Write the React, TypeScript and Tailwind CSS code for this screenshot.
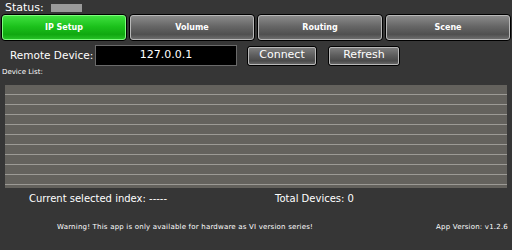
import React from "react";

const font = { fontFamily: '"DejaVu Sans", "Liberation Sans", sans-serif' };

function Tab({ label, active }: { label: string; active?: boolean }) {
  return (
    <div className="flex-1 rounded-[4px] border border-black p-0">
      <div
        className={
          "h-full rounded-[3px] border flex items-center justify-center text-[8px] font-bold text-white " +
          (active
            ? "border-[#7dff7d] bg-[linear-gradient(to_bottom,#3fe03f,#1cc21c_45%,#10a810_80%,#26c026)]"
            : "border-[#b8b8b8] bg-[linear-gradient(to_bottom,#8a8a8a,#666666_45%,#505050_80%,#6e6e6e)]")
        }
      >
        {label}
      </div>
    </div>
  );
}

function Btn({ label, w }: { label: string; w: string }) {
  return (
    <div className={"h-[20px] rounded-[3px] border border-black " + w}>
      <div className="h-full rounded-[2px] border border-[#b8b8b8] bg-[linear-gradient(to_bottom,#7e7e7e,#5e5e5e_45%,#4a4a4a_80%,#666666)] flex items-center justify-center text-[11px] text-white">
        {label}
      </div>
    </div>
  );
}

export default function App() {
  const rows = Array.from({ length: 10 });
  return (
    <div className="w-[512px] h-[250px] bg-[#363636] text-white overflow-hidden flex flex-col" style={font}>
      <div className="flex items-center h-[14px] pl-[5px] pt-[1px]">
        <span className="text-[11px] leading-none">Status:</span>
        <div className="ml-[7px] w-[31px] h-[8px] bg-[#9a9a9a]" />
      </div>
      <div className="flex gap-[2px] px-[1px] h-[27px]">
        <Tab label="IP Setup" active />
        <Tab label="Volume" />
        <Tab label="Routing" />
        <Tab label="Scene" />
      </div>
      <div className="flex items-center mt-[4px] h-[21px]">
        <span className="ml-[10px] w-[85px] text-[10.5px] whitespace-nowrap">Remote Device:</span>
        <div className="w-[142px] h-[21px] bg-black border border-[#6a6a6a] flex items-center justify-center text-[11px]">
          127.0.0.1
        </div>
        <div className="ml-[10px]">
          <Btn label="Connect" w="w-[70px]" />
        </div>
        <div className="ml-[11px]">
          <Btn label="Refresh" w="w-[72px]" />
        </div>
      </div>
      <div className="text-[7px] leading-none pl-[2px] mt-[3px]">Device List:</div>
      <div className="mt-[9px] mx-[5px] h-[103px] bg-[#64625d] flex flex-col">
        {rows.map((_, i) => (
          <div key={i} className="h-[10px] border-b border-[#9c9a95]" />
        ))}
      </div>
      <div className="flex mt-[6px] text-[10px] leading-none">
        <span className="ml-[29px]">Current selected index: -----</span>
        <span className="ml-[108px]">Total Devices: 0</span>
      </div>
      <div className="flex justify-between mt-[20px] text-[7px] leading-none pl-[57px] pr-[4px] tracking-[0.2px]">
        <span>Warning! This app is only available for hardware as VI version series!</span>
        <span>App Version: v1.2.6</span>
      </div>
    </div>
  );
}
